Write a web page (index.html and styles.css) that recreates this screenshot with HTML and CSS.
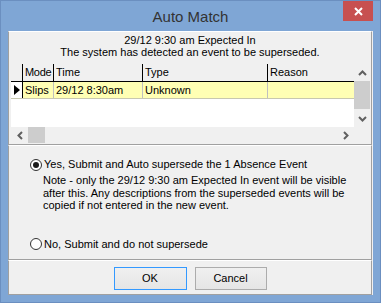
FILE: index.html
```html
<!DOCTYPE html>
<html>
<head>
<meta charset="utf-8">
<link rel="stylesheet" href="styles.css">
</head>
<body>
<div class="window">
  <div class="titlebar">
    <div class="title">Auto Match</div>
    <div class="close"><svg width="9" height="9" viewBox="0 0 9 9"><path d="M1 1L8 8M8 1L1 8" stroke="#fff" stroke-width="2" fill="none"/></svg></div>
  </div>
  <div class="client">
    <div class="panel panel-top">
      <div class="caption">29/12 9:30 am Expected In<br>The system has detected an event to be superseded.</div>
      <div class="grid">
        <div class="rows">
          <div class="row head">
            <div class="cell"></div>
            <div class="cell tight">Mode</div>
            <div class="cell">Time</div>
            <div class="cell">Type</div>
            <div class="cell">Reason</div>
          </div>
          <div class="row data">
            <div class="cell ind"><svg width="6" height="10" viewBox="0 0 6 10"><path d="M0 0L6 5L0 10Z" fill="#000"/></svg></div>
            <div class="cell">Slips</div>
            <div class="cell">29/12 8:30am</div>
            <div class="cell">Unknown</div>
            <div class="cell"></div>
          </div>
        </div>
        <div class="vscroll">
          <div class="sbtn"><svg width="9" height="6" viewBox="0 0 9 6"><path d="M1 5L4.5 1.5L8 5" stroke="#606060" stroke-width="2" fill="none"/></svg></div>
          <div class="vthumb"></div>
          <div class="sfill"></div>
          <div class="sbtn"><svg width="9" height="6" viewBox="0 0 9 6"><path d="M1 1L4.5 4.5L8 1" stroke="#606060" stroke-width="2" fill="none"/></svg></div>
        </div>
        <div class="hscroll">
          <div class="sbtn"><svg width="6" height="9" viewBox="0 0 6 9"><path d="M5 1L1.5 4.5L5 8" stroke="#606060" stroke-width="2" fill="none"/></svg></div>
          <div class="hthumb"></div>
          <div class="sfill"></div>
          <div class="sbtn"><svg width="6" height="9" viewBox="0 0 6 9"><path d="M1 1L4.5 4.5L1 8" stroke="#606060" stroke-width="2" fill="none"/></svg></div>
        </div>
        <div class="corner"></div>
      </div>
    </div>
    <div class="panel panel-options">
      <div class="radio-row"><span class="radio checked"></span><span>Yes, Submit and Auto supersede the 1 Absence Event</span></div>
      <div class="note">Note - only the 29/12 9:30 am Expected In event will be visible<br>after this. Any descriptions from the superseded events will be<br>copied if not entered in the new event.</div>
      <div class="radio-row second"><span class="radio"></span><span>No, Submit and do not supersede</span></div>
    </div>
    <div class="panel panel-buttons">
      <button class="btn btn-ok">OK</button>
      <button class="btn btn-cancel">Cancel</button>
    </div>
  </div>
</div>
</body>
</html>
```
FILE: styles.css
```css
* { box-sizing: border-box; }
html, body { margin: 0; padding: 0; }
body {
  width: 381px;
  height: 303px;
  overflow: hidden;
  font-family: "Liberation Sans", Arial, sans-serif;
  font-size: 11px;
  color: #000;
}
.window {
  width: 381px;
  height: 303px;
  background: #7fa6d5;
  border: 1px solid #6b8fc0;
  display: flex;
  flex-direction: column;
}
.titlebar {
  height: 30px;
  flex: none;
  display: grid;
  grid-template-columns: 1fr auto 1fr;
  align-items: start;
}
.title {
  grid-column: 2;
  padding-top: 7px;
  font-size: 15px;
  line-height: 17px;
  color: #333;
}
.close {
  grid-column: 3;
  justify-self: end;
  margin-right: 7px;
  width: 30px;
  height: 20px;
  background: #c75050;
  display: flex;
  align-items: center;
  justify-content: center;
}
.client {
  flex: 1;
  margin: 0 7px 7px;
  background: #f0f0f0;
  display: flex;
  flex-direction: column;
}
.panel {
  border: 1px solid #a0a0a0;
  border-top-color: #fff;
  margin-right: 1px;
}
.panel-top { height: 114px; flex: none; }
.panel-options { height: 115px; flex: none; padding: 12px 0 0 21px; }
.panel-buttons {
  flex: 1;
  display: flex;
  justify-content: center;
  align-items: flex-start;
  gap: 8px;
  padding-top: 6px;
}
.caption {
  padding-top: 2px;
  text-align: center;
  line-height: 12px;
}
.grid {
  margin: 6px 0 0 2px;
  width: 359px;
  height: 79px;
  display: grid;
  grid-template-columns: 343px 16px;
  grid-template-rows: 63px 16px;
}
.rows { background: #fff; }
.row {
  display: grid;
  grid-template-columns: 12px 31px 89px 125px 86px;
}
.cell { overflow: hidden; white-space: nowrap; }
.row.head {
  height: 18px;
  background: #f0f0f0;
  border-bottom: 1px solid #000;
}
.row.head .cell {
  border-right: 1px solid #000;
  padding-left: 2px;
  line-height: 17px;
}
.row.head .tight { letter-spacing: -0.3px; }
.row.head .cell:last-child { border-right: 0; }
.row.data {
  height: 17px;
  background: #ffffb4;
  border-bottom: 1px solid #c8c8b0;
}
.row.data .cell {
  border-right: 1px solid #c0c0c0;
  padding-left: 2px;
  line-height: 16px;
}
.row.data .cell:last-child { border-right: 0; }
.row.data .ind {
  background: #fff;
  border-right-color: #000;
  padding-left: 3px;
  display: flex;
  align-items: center;
}
.vscroll {
  background: #f0f0f0;
  display: flex;
  flex-direction: column;
}
.hscroll {
  background: #f0f0f0;
  display: flex;
}
.corner { background: #f0f0f0; }
.sbtn {
  flex: none;
  width: 16px;
  height: 17px;
  display: flex;
  align-items: center;
  justify-content: center;
}
.hscroll .sbtn { width: 17px; height: 16px; }
.sfill { flex: 1; }
.vthumb { flex: none; height: 28px; background: #cdcdcd; }
.hthumb { flex: none; width: 17px; background: #cdcdcd; }
.radio-row {
  display: flex;
  align-items: center;
  gap: 2px;
  height: 13px;
  line-height: 13px;
  white-space: nowrap;
}
.radio-row.second { margin-top: 26px; }
.radio {
  width: 12px;
  height: 12px;
  border-radius: 50%;
  border: 1px solid #333;
  background: #fff;
  display: flex;
  align-items: center;
  justify-content: center;
}
.radio.checked::after {
  content: "";
  width: 6px;
  height: 6px;
  border-radius: 50%;
  background: #1a1a1a;
}
.note {
  margin: 3px 0 0 13px;
  line-height: 12.5px;
  white-space: nowrap;
}
.btn {
  height: 23px;
  padding: 0;
  margin: 0;
  border: 1px solid #acacac;
  background: linear-gradient(#f0f0f0, #e5e5e5);
  font: inherit;
  color: #000;
  line-height: 21px;
  text-align: center;
}
.btn-ok { width: 73px; border-color: #3399ff; }
.btn-cancel { width: 72px; }
```
